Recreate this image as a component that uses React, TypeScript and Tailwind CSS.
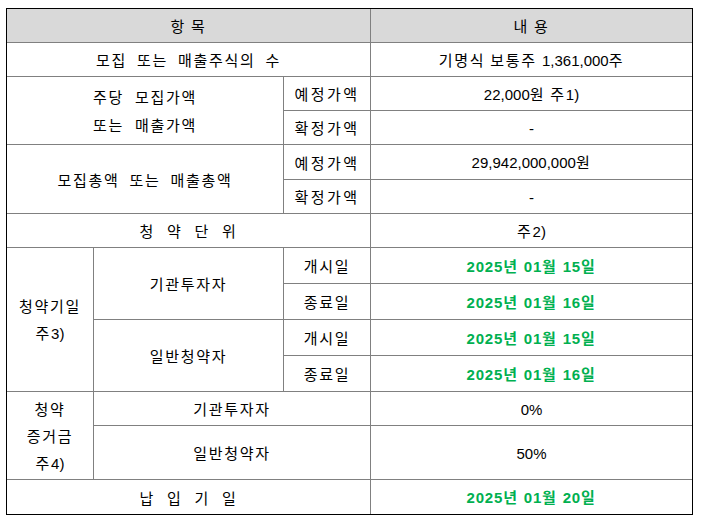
import React from "react";

const font = { fontFamily: '"Noto Sans CJK KR", "Noto Sans", sans-serif' };
const latin = { fontFamily: '"Liberation Sans", Arial, sans-serif' };

function T({ text, digitClass = "tracking-[0px]" }: { text: string; digitClass?: string }) {
  const parts = text.split(/([0-9,.%()\-]+)/).filter((p) => p.length > 0);
  return (
    <span>
      {parts.map((p, i) =>
        /^[0-9,.%()\-]+$/.test(p) ? (
          <span key={i} className={digitClass} style={latin}>
            {p}
          </span>
        ) : (
          <span key={i}>{p}</span>
        )
      )}
    </span>
  );
}

function Cell({
  className = "",
  children,
}: {
  className?: string;
  children: React.ReactNode;
}) {
  return (
    <div
      className={
        "flex flex-col items-center justify-center text-center border-[#808080] text-[15px] leading-[27px] tracking-[1.7px] text-black whitespace-pre " +
        className
      }
    >
      {children}
    </div>
  );
}

function Green({ text }: { text: string }) {
  return (
    <span className="text-[#00b050] font-bold">
      <T text={text} digitClass="tracking-[0.8px]" />
    </span>
  );
}

export default function App() {
  return (
    <div className="w-[701px] h-[523px] bg-white overflow-hidden" style={font}>
      <div className="pt-[8px] pl-[6px]">
        <div className="w-[687px] border border-black grid grid-cols-[87px_190px_87px_321px] grid-rows-[34px_34px_34px_34px_35px_34px_34px_36px_36px_36px_36px_34px_54px_34px]">
          <Cell className="col-span-3 bg-[#d9d9d9] border-b border-r">항 목</Cell>
          <Cell className="bg-[#d9d9d9] border-b">내 용</Cell>

          <Cell className="col-span-3 border-b border-r [word-spacing:5px]">모집 또는 매출주식의 수</Cell>
          <Cell className="border-b">
            <T text="기명식 보통주 1,361,000주" />
          </Cell>

          <Cell className="col-span-2 row-span-2 border-b border-r leading-[28px] [word-spacing:6px]">
            <span>주당 모집가액</span>
            <span>또는 매출가액</span>
          </Cell>
          <Cell className="border-b border-r tracking-[2.5px]">예정가액</Cell>
          <Cell className="border-b">
            <T text="22,000원 주1)" />
          </Cell>
          <Cell className="border-b border-r tracking-[2.5px]">확정가액</Cell>
          <Cell className="border-b">
            <T text="-" />
          </Cell>

          <Cell className="col-span-2 row-span-2 border-b border-r [word-spacing:5px]">모집총액 또는 매출총액</Cell>
          <Cell className="border-b border-r tracking-[2.5px]">예정가액</Cell>
          <Cell className="border-b">
            <T text="29,942,000,000원" />
          </Cell>
          <Cell className="border-b border-r tracking-[2.5px]">확정가액</Cell>
          <Cell className="border-b">
            <T text="-" />
          </Cell>

          <Cell className="col-span-3 border-b border-r [word-spacing:7px]">청 약 단 위</Cell>
          <Cell className="border-b">
            <T text="주2)" />
          </Cell>

          <Cell className="row-span-4 border-b border-r leading-[26px]">
            <span>청약기일</span>
            <T text="주3)" />
          </Cell>
          <Cell className="row-span-2 border-b border-r">기관투자자</Cell>
          <Cell className="border-b border-r">개시일</Cell>
          <Cell className="border-b">
            <Green text="2025년 01월 15일" />
          </Cell>
          <Cell className="border-b border-r">종료일</Cell>
          <Cell className="border-b">
            <Green text="2025년 01월 16일" />
          </Cell>
          <Cell className="row-span-2 border-b border-r">일반청약자</Cell>
          <Cell className="border-b border-r">개시일</Cell>
          <Cell className="border-b">
            <Green text="2025년 01월 15일" />
          </Cell>
          <Cell className="border-b border-r">종료일</Cell>
          <Cell className="border-b">
            <Green text="2025년 01월 16일" />
          </Cell>

          <Cell className="row-span-2 border-b border-r">
            <span>청약</span>
            <span>증거금</span>
            <T text="주4)" />
          </Cell>
          <Cell className="col-span-2 border-b border-r">기관투자자</Cell>
          <Cell className="border-b">
            <T text="0%" />
          </Cell>
          <Cell className="col-span-2 border-b border-r">일반청약자</Cell>
          <Cell className="border-b">
            <T text="50%" />
          </Cell>

          <Cell className="col-span-3 border-r [word-spacing:7px]">납 입 기 일</Cell>
          <Cell>
            <Green text="2025년 01월 20일" />
          </Cell>
        </div>
      </div>
    </div>
  );
}
